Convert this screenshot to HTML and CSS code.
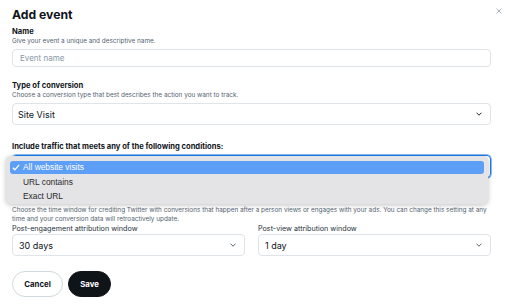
FILE: index.html
```html
<!DOCTYPE html>
<html>
<head>
<meta charset="utf-8">
<link rel="stylesheet" href="styles.css">
</head>
<body>
<div class="modal">
  <h1 class="title">Add event</h1>
  <button class="close" aria-label="Close">
    <svg width="6" height="6" viewBox="0 0 6 6"><path d="M0.5 0.5L5.5 5.5M5.5 0.5L0.5 5.5" stroke="#a9b6c2" stroke-width="1"/></svg>
  </button>

  <div class="field">
    <div class="label">Name</div>
    <div class="desc">Give your event a unique and descriptive name.</div>
    <div class="input placeholder">Event name</div>
  </div>

  <div class="field f-type">
    <div class="label">Type of conversion</div>
    <div class="desc">Choose a conversion type that best describes the action you want to track.</div>
    <div class="select">
      <span>Site Visit</span>
      <svg class="chev" width="6" height="4" viewBox="0 0 6 4"><path d="M0.5 0.7L3 3.2L5.5 0.7" fill="none" stroke="#222" stroke-width="1"/></svg>
    </div>
  </div>

  <div class="field f-include">
    <div class="label big">Include traffic that meets any of the following conditions:</div>
    <div class="select focus"></div>
    <div class="menu">
      <div class="item active"><svg class="check" width="8" height="7" viewBox="0 0 8 7"><path d="M0.9 3.8L2.9 5.8L7.1 0.8" fill="none" stroke="#fff" stroke-width="1.3"/></svg>All website visits</div>
      <div class="item">URL contains</div>
      <div class="item">Exact URL</div>
    </div>
  </div>

  <div class="desc long">Choose the time window for crediting Twitter with conversions that happen after a person views or engages with your ads. You can change this setting at any time and your conversion data will retroactively update.</div>

  <div class="row">
    <div class="col">
      <div class="sublabel">Post-engagement attribution window</div>
      <div class="select tall">
        <span>30 days</span>
        <svg class="chev" width="6" height="4" viewBox="0 0 6 4"><path d="M0.5 0.7L3 3.2L5.5 0.7" fill="none" stroke="#536471" stroke-width="1"/></svg>
      </div>
    </div>
    <div class="col">
      <div class="sublabel">Post-view attribution window</div>
      <div class="select tall">
        <span>1 day</span>
        <svg class="chev" width="6" height="4" viewBox="0 0 6 4"><path d="M0.5 0.7L3 3.2L5.5 0.7" fill="none" stroke="#536471" stroke-width="1"/></svg>
      </div>
    </div>
  </div>

  <div class="actions">
    <button class="btn cancel">Cancel</button>
    <button class="btn save">Save</button>
  </div>
</div>
</body>
</html>
```

FILE: styles.css
```css
* { box-sizing: border-box; }
html, body { margin: 0; padding: 0; background: #fff; }
body {
  font-family: Inter, "Liberation Sans", Arial, sans-serif;
  color: #0f1419;
  width: 512px;
  height: 307px;
  overflow: hidden;
}
.modal {
  position: relative;
  padding: 6px 21px 0 12px;
}
.title {
  margin: 0;
  font-size: 12.2px;
  line-height: 18px;
  font-weight: 700;
}
.close {
  position: absolute;
  top: 7px;
  right: 9px;
  width: 8px;
  height: 8px;
  padding: 1px;
  border: 0;
  background: none;
  display: flex;
}
.field { margin-top: 3px; position: relative; }
.f-type { margin-top: 14px; }
.f-include { margin-top: 16px; }
.label {
  font-size: 7.6px;
  line-height: 10px;
  font-weight: 700;
}
.label.big { line-height: 11px; margin-bottom: 3px; }
.desc {
  font-size: 6.4px;
  line-height: 8px;
  color: #536471;
  margin-bottom: 4px;
}
.input {
  height: 18px;
  border: 1px solid #dfe4e8;
  border-radius: 4px;
  display: flex;
  align-items: center;
  padding-left: 7px;
  font-size: 8px;
}
.placeholder { color: #8899a6; }
.select {
  height: 22px;
  border: 1px solid #dfe4e8;
  border-radius: 4px;
  display: flex;
  align-items: center;
  justify-content: space-between;
  padding: 0 8px 0 5px;
  font-size: 9px;
}
.select.focus {
  height: 23px;
  border: 1px solid #1d7cf2;
  box-shadow: 0 0 0 0.5px #1d7cf2;
}
.chev { display: block; }
.menu {
  position: absolute;
  left: -6px;
  right: 3px;
  top: 15px;
  height: 48px;
  background: #e4e4e6;
  border-radius: 5px;
  box-shadow: 0 1px 5px rgba(0,0,0,0.25);
  padding: 5px 4px 4px;
  font-family: "Liberation Sans", Arial, sans-serif;
}
.item {
  height: 13px;
  line-height: 14px;
  margin-top: 1px;
  font-size: 8.4px;
  color: #2a2a2a;
  padding-left: 13px;
  position: relative;
  border-radius: 3px;
}
.item.active {
  margin-top: 0;
  height: 13px;
  line-height: 13px;
  background: #5d9ef6;
  color: #fff;
}
.check {
  position: absolute;
  left: 2px;
  top: 3px;
}
.desc.long {
  margin-top: 28px;
  line-height: 9px;
  margin-bottom: 0;
  padding-right: 4px;
}
.row {
  display: grid;
  grid-template-columns: 233px 233px;
  column-gap: 13px;
  margin-top: 0;
}
.sublabel {
  font-size: 7.2px;
  line-height: 10px;
  color: #26313a;
}
.select.tall { padding-left: 6px; }
.actions {
  display: flex;
  gap: 5px;
  margin-top: 15px;
}
.btn {
  height: 26px;
  border-radius: 13px;
  font-family: Inter, "Liberation Sans", Arial, sans-serif;
  font-weight: 700;
  font-size: 7.8px;
  padding: 0;
}
.cancel {
  width: 51px;
  background: #fff;
  border: 1px solid #cfd9de;
  color: #0f1419;
}
.save {
  width: 43px;
  background: #0f1419;
  border: 1px solid #0f1419;
  color: #fff;
}
```
